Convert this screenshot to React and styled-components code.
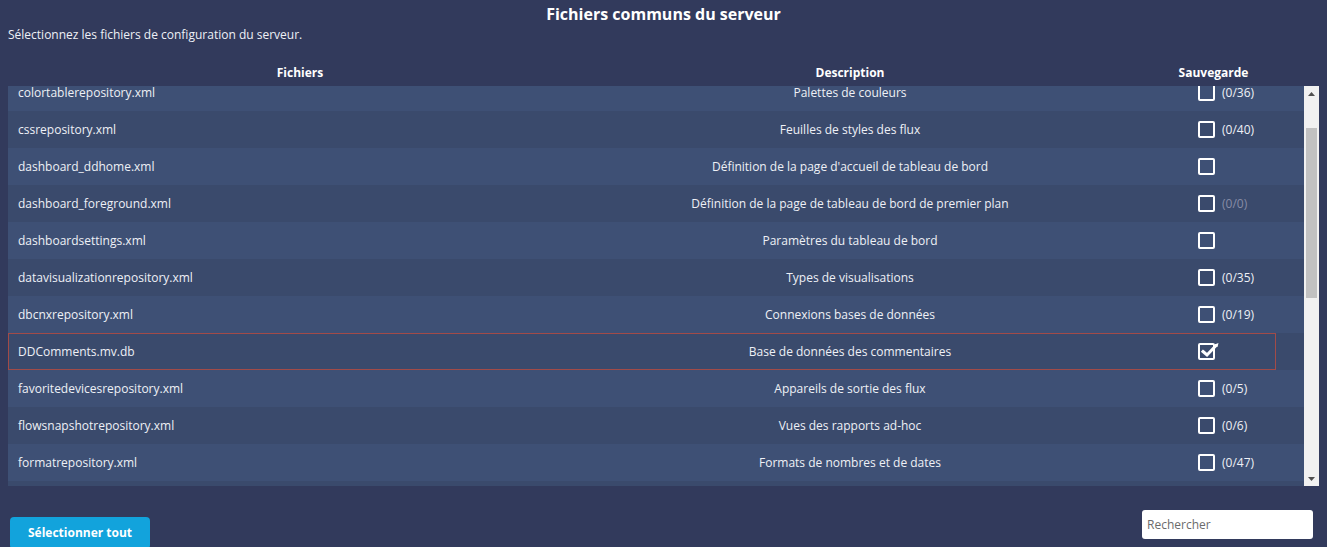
import { useEffect, useRef } from 'react'
import styled, { createGlobalStyle } from 'styled-components'

const GlobalStyle = createGlobalStyle`
  html, body {
    margin: 0;
    padding: 0;
    background: #323a5c;
    font-family: "Open Sans", "Liberation Sans", sans-serif;
    color: #eef0f6;
    overflow: hidden;
  }
  * { box-sizing: border-box; }
`

const Page = styled.div`
  width: 1327px;
  height: 547px;
  padding: 0 8px;
  display: flex;
  flex-direction: column;
  & > * { flex-shrink: 0; }
`
const Title = styled.h1`
  margin: 0;
  height: 27px;
  padding-top: 3px;
  line-height: 22px;
  font-size: 16px;
  font-weight: 700;
  text-align: center;
  color: #ffffff;
`
const Subtitle = styled.p`
  margin: 0;
  height: 16px;
  line-height: 16px;
  font-size: 12px;
  color: #eef0f6;
`
const HeaderRow = styled.div`
  margin-top: 15px;
  height: 28px;
  display: grid;
  grid-template-columns: 584px 516px 1fr;
  align-items: center;
  font-size: 12px;
  font-weight: 700;
  color: #ffffff;
  text-align: center;
`
const TableArea = styled.div`
  display: flex;
  height: 400px;
`
const Rows = styled.div`
  flex: 1;
  overflow: hidden;
`
const Row = styled.div`
  position: relative;
  height: 37px;
  display: grid;
  grid-template-columns: 584px 516px 1fr;
  align-items: center;
  font-size: 12px;
  background: ${p => (p.$odd ? '#3a4a6c' : '#3e5075')};
  &::after {
    content: '';
    display: ${p => (p.$selected ? 'block' : 'none')};
    position: absolute;
    left: 0;
    top: 0;
    bottom: 0;
    right: 28px;
    border: 1px solid #a24b48;
    pointer-events: none;
  }
`
const FileCell = styled.div`
  padding-left: 10px;
  color: #eef0f6;
`
const DescCell = styled.div`
  text-align: center;
  color: #eef0f6;
`
const SaveCell = styled.div`
  display: flex;
  align-items: center;
  gap: 7px;
  padding-left: 90px;
`
const Box = styled.span`
  position: relative;
  width: 17px;
  height: 17px;
  border: 2px solid #ffffff;
  border-radius: 2px;
  flex: none;
  svg {
    position: absolute;
    left: 0;
    top: -4px;
  }
`
const Count = styled.span`
  font-size: 12px;
  color: ${p => (p.$empty ? '#878ca6' : '#eef0f6')};
`
const ScrollBar = styled.div`
  width: 15px;
  background: #f1f1f1;
  display: flex;
  flex-direction: column;
`
const Arrow = styled.div`
  height: 15px;
  display: flex;
  align-items: center;
  justify-content: center;
  svg { display: block; }
`
const Track = styled.div`
  flex: 1;
  padding: 0 2px;
`
const Thumb = styled.div`
  height: 170px;
  background: #c1c1c1;
`
const Footer = styled.div`
  margin-top: 24px;
  display: flex;
  justify-content: space-between;
  align-items: flex-start;
`
const SelectButton = styled.button`
  margin: 7px 0 0 2px;
  width: 140px;
  height: 32px;
  border: none;
  border-radius: 4px;
  background: #12a3dc;
  color: #ffffff;
  font-family: "Open Sans", "Liberation Sans", sans-serif;
  font-size: 12px;
  font-weight: 700;
  padding-bottom: 2px;
`
const Search = styled.input`
  margin-right: 6px;
  width: 171px;
  height: 29px;
  border: none;
  border-radius: 3px;
  background: #ffffff;
  padding: 0 5px;
  font-family: "Open Sans", "Liberation Sans", sans-serif;
  font-size: 12px;
  outline: none;
  &::placeholder { color: #6b6b6b; }
`

const files = [
  ['colortablerepository.xml', 'Palettes de couleurs', '(0/36)'],
  ['cssrepository.xml', 'Feuilles de styles des flux', '(0/40)'],
  ['dashboard_ddhome.xml', "Définition de la page d'accueil de tableau de bord", ''],
  ['dashboard_foreground.xml', 'Définition de la page de tableau de bord de premier plan', '(0/0)'],
  ['dashboardsettings.xml', 'Paramètres du tableau de bord', ''],
  ['datavisualizationrepository.xml', 'Types de visualisations', '(0/35)'],
  ['dbcnxrepository.xml', 'Connexions bases de données', '(0/19)'],
  ['DDComments.mv.db', 'Base de données des commentaires', '', true],
  ['favoritedevicesrepository.xml', 'Appareils de sortie des flux', '(0/5)'],
  ['flowsnapshotrepository.xml', 'Vues des rapports ad-hoc', '(0/6)'],
  ['formatrepository.xml', 'Formats de nombres et de dates', '(0/47)'],
  ['genericconnectorrepository.xml', 'Connecteurs génériques', '(0/3)'],
]

const Check = () => (
  <svg width="22" height="18" viewBox="0 0 22 18" fill="none">
    <path d="M3 10.5 L7 14 L15.5 5" stroke="#ffffff" strokeWidth="3" strokeLinecap="square" />
    <path d="M14.5 3.5 L18.5 2 L17.5 6 Z" fill="#ffffff" />
  </svg>
)

const App = () => {
  const rowsRef = useRef(null)
  useEffect(() => {
    if (rowsRef.current) rowsRef.current.scrollTop = 12
  }, [])
  return (
    <Page>
      <GlobalStyle />
      <Title>Fichiers communs du serveur</Title>
      <Subtitle>Sélectionnez les fichiers de configuration du serveur.</Subtitle>
      <HeaderRow>
        <div>Fichiers</div>
        <div>Description</div>
        <div>Sauvegarde</div>
      </HeaderRow>
      <TableArea>
        <Rows ref={rowsRef}>
          {files.map(([name, desc, count, checked], i) => (
            <Row key={name} $odd={i % 2 === 1} $selected={checked}>
              <FileCell>{name}</FileCell>
              <DescCell>{desc}</DescCell>
              <SaveCell>
                <Box>{checked && <Check />}</Box>
                {count && <Count $empty={count === '(0/0)'}>{count}</Count>}
              </SaveCell>
            </Row>
          ))}
        </Rows>
        <ScrollBar>
          <Arrow>
            <svg width="7" height="4" viewBox="0 0 7 4"><path d="M0 4 L3.5 0 L7 4 Z" fill="#505050" /></svg>
          </Arrow>
          <Track>
            <Thumb style={{ marginTop: 27 }} />
          </Track>
          <Arrow>
            <svg width="7" height="4" viewBox="0 0 7 4"><path d="M0 0 L3.5 4 L7 0 Z" fill="#505050" /></svg>
          </Arrow>
        </ScrollBar>
      </TableArea>
      <Footer>
        <SelectButton>Sélectionner tout</SelectButton>
        <Search placeholder="Rechercher" />
      </Footer>
    </Page>
  )
}

export default App
